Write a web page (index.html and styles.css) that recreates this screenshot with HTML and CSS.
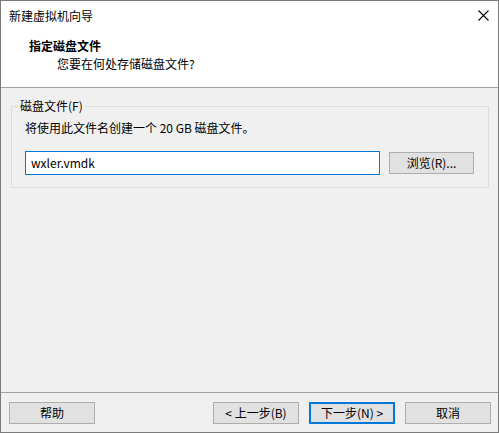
FILE: index.html
```html
<!DOCTYPE html>
<html lang="zh-CN">
<head>
<meta charset="utf-8">
<title>新建虚拟机向导</title>
<link rel="stylesheet" href="styles.css">
</head>
<body>
<div class="window">
  <div class="titlebar">
    <span class="title">新建虚拟机向导</span>
    <svg class="close" width="11" height="11" viewBox="0 0 11 11"><path d="M0.5 0.5 L10.5 10.5 M10.5 0.5 L0.5 10.5" stroke="#000" stroke-width="1.1" fill="none"/></svg>
  </div>
  <div class="header">
    <div class="h-title">指定磁盘文件</div>
    <div class="h-sub">您要在何处存储磁盘文件?</div>
  </div>
  <div class="content">
    <div class="group">
      <span class="group-label">磁盘文件(F)</span>
      <div class="desc">将使用此文件名创建一个 20 GB 磁盘文件。</div>
      <div class="row">
        <div class="input">wxler.vmdk</div>
        <div class="btn browse">浏览(R)...</div>
      </div>
    </div>
  </div>
  <div class="footer">
    <div class="btn">帮助</div>
    <div class="spacer"></div>
    <div class="btn">&lt; 上一步(B)</div>
    <div class="btn primary">下一步(N) &gt;</div>
    <div class="btn">取消</div>
  </div>
</div>
</body>
</html>
```

FILE: styles.css
```css
* { box-sizing: border-box; }
html, body { margin: 0; padding: 0; background: #fff; }
body {
  font-family: "Noto Sans CJK SC", "Noto Sans", sans-serif;
  font-size: 12px;
  color: #000;
}
.window {
  width: 499px;
  height: 433px;
  border: 1px solid #7a7a7a;
  display: flex;
  flex-direction: column;
  background: #f0f0f0;
}
.titlebar {
  height: 30px;
  background: #fff;
  display: flex;
  align-items: center;
  justify-content: space-between;
  padding: 0 9px 1px 8px;
}
.title { line-height: 16px; }
.close { display: block; }
.header {
  height: 57px;
  background: #fff;
  border-bottom: 1px solid #a0a0a0;
  padding: 6px 0 0 28px;
}
.h-title { font-weight: bold; line-height: 18px; }
.h-sub { line-height: 18px; padding-left: 28px; }
.content {
  flex: 1;
  padding: 18px 9px 0 10px;
}
.group {
  position: relative;
  border: 1px solid #dcdcdc;
  height: 82px;
  padding: 13px 12px 0 13px;
}
.group-label {
  position: absolute;
  top: -9px;
  left: 6px;
  padding: 0 2px;
  background: #f0f0f0;
  line-height: 16px;
}
.desc { line-height: 16px; }
.row {
  display: flex;
  align-items: center;
  margin-top: 15px;
  gap: 9px;
}
.input {
  width: 355px;
  height: 24px;
  border: 1px solid #0078d7;
  background: #fff;
  padding-left: 5px;
  line-height: 21px;
}
.btn {
  width: 86px;
  height: 22px;
  border: 1px solid #adadad;
  background: #e1e1e1;
  text-align: center;
  line-height: 19px;
}
.browse { width: 85px; }
.btn.primary {
  border: 2px solid #0078d7;
  line-height: 17px;
}
.footer {
  height: 40px;
  border-top: 1px solid #a0a0a0;
  display: flex;
  gap: 10px;
  padding: 9px 7px 0 8px;
}
.spacer { flex: 1; }
```
